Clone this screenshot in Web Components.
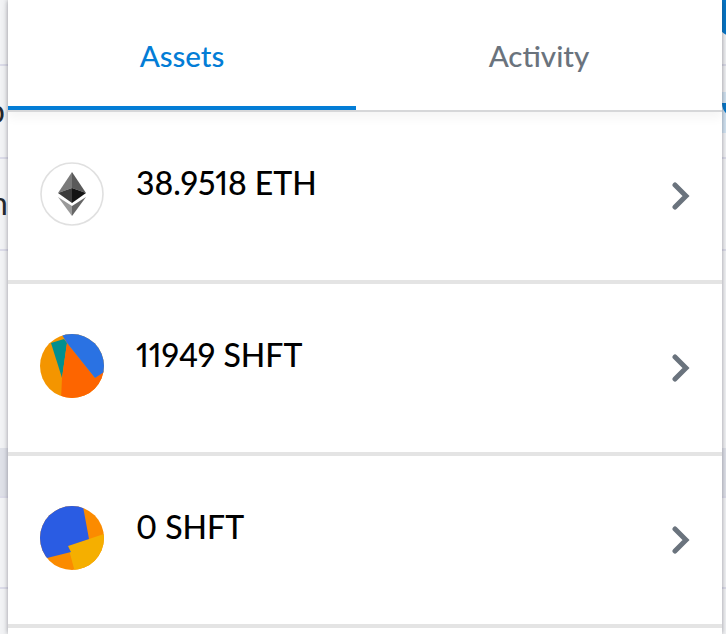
<!DOCTYPE html>
<html>
<head>
<meta charset="utf-8">
<style>
  html, body { margin: 0; height: 100%; overflow: hidden; background: #fff; }
</style>
</head>
<body>
<wallet-page>
  <asset-modal>
    <modal-tabs></modal-tabs>
    <asset-row amount="38.9518 ETH" icon="eth"></asset-row>
    <asset-row amount="11949 SHFT" icon="pie"></asset-row>
    <asset-row amount="0 SHFT" icon="blocks"></asset-row>
  </asset-modal>
</wallet-page>

<script>
const ICONS = {
	eth: `<svg width="64" height="64" viewBox="0 0 64 64">
		<circle cx="32" cy="32" r="31" fill="#fff" stroke="#e0e0e0" stroke-width="1.6"/>
		<path d="M32 10 18 31 32 26z" fill="#7a7a7a"/>
		<path d="M32 10 46 31 32 26z" fill="#5a5a5a"/>
		<path d="M32 26 18 31 32 41z" fill="#3c3c3c"/>
		<path d="M32 26 46 31 32 41z" fill="#141414"/>
		<path d="M18 35 32 44V54z" fill="#9a9a9a"/>
		<path d="M46 35 32 44V54z" fill="#666"/>
	</svg>`,
	pie: `<svg width="64" height="64" viewBox="0 0 64 64">
		<defs><clipPath id="c"><circle cx="32" cy="32" r="32"/></clipPath></defs>
		<g clip-path="url(#c)">
			<rect width="64" height="64" fill="#f49500"/>
			<path d="M11 9 24 5 27 9 22 44z" fill="#028f8f"/>
			<path d="M21 66 22 44 27 9 55 44 70 32V70z" fill="#fd6500"/>
			<path d="M22 1 27 9 55 44 70 34V-5H22z" fill="#2a72e3"/>
		</g>
	</svg>`,
	blocks: `<svg width="64" height="64" viewBox="0 0 64 64">
		<defs><clipPath id="d"><circle cx="32" cy="32" r="32"/></clipPath></defs>
		<g clip-path="url(#d)">
			<rect width="64" height="64" fill="#fb8b00"/>
			<path d="M28 40 70 26V70H36z" fill="#f5af00"/>
			<path d="M-5-5H42L49 33 28 40 31 46 7 52-5 56z" fill="#2a5ce3"/>
		</g>
	</svg>`,
};

class WalletPage extends HTMLElement {
	constructor() {
		super();
		this.attachShadow({ mode: 'open' });
		this.shadowRoot.innerHTML = `
			<style>
				:host {
					display: block;
					position: relative;
					width: 726px;
					height: 634px;
					overflow: hidden;
					background: #f2f3f5;
					font-family: 'Lato', 'Noto Sans', sans-serif;
				}
				.row { box-sizing: border-box; border-bottom: 2px solid #dcdce9; background: #f2f3f5; position: relative; }
				.top { height: 66px; }
				.mid { height: 93px; }
				.low { height: 92px; }
				.gap { height: 247px; background: linear-gradient(#f2f3f5 197px, #dfe1e8 197px); }
				.end { height: 91px; }
				.peek { position: absolute; font-size: 32px; line-height: 1; color: #24292e; }
				.mid .peek { top: 29px; left: -13px; }
				.low .peek { top: 28px; left: -10px; }
				.tint { position: absolute; left: 720px; right: 0; top: 26px; height: 41px; background: #d3e4f2; }
				.clip { position: absolute; inset: 11px 0 0; overflow: hidden; }
				.dot { position: absolute; border-radius: 50%; background: #0376c9; }
				.top .dot { width: 48px; height: 48px; left: 714px; top: -10px; }
				.tint .dot { width: 30px; height: 30px; left: 2px; top: -15px; }
			</style>
			<div class="row top"><span class="dot"></span></div>
			<div class="row mid"><span class="peek">p</span><div class="tint"><div class="clip"><span class="dot"></span></div></div></div>
			<div class="row low"><span class="peek">n</span></div>
			<div class="row gap"></div>
			<div class="row end"></div>
			<slot></slot>
		`;
	}
}

class AssetModal extends HTMLElement {
	constructor() {
		super();
		this.attachShadow({ mode: 'open' });
		this.shadowRoot.innerHTML = `
			<style>
				:host {
					display: flex;
					flex-direction: column;
					position: absolute;
					top: 0;
					bottom: 0;
					left: 8px;
					width: 714px;
					background: #fff;
					box-shadow: 0 0 5px rgba(60, 60, 70, 0.5);
				}
			</style>
			<slot></slot>
		`;
	}
}

class ModalTabs extends HTMLElement {
	constructor() {
		super();
		this.attachShadow({ mode: 'open' });
		this.shadowRoot.innerHTML = `
			<style>
				:host {
					display: flex;
					flex: none;
					height: 112px;
					box-sizing: border-box;
					border-bottom: 2px solid #d6d7d9;
					box-shadow: 0 6px 10px rgba(0, 0, 0, 0.045);
					font-size: 29.5px;
					font-weight: 500;
				}
				.tab {
					text-align: center;
					line-height: 111px;
					height: 110px;
					box-sizing: border-box;
					color: #6a737d;
				}
				.active { flex: 0 0 348px; color: #037dd6; border-bottom: 4px solid #037dd6; }
				.rest { flex: 1; }
			</style>
			<div class="tab active">Assets</div>
			<div class="tab rest">Activity</div>
		`;
	}
}

class AssetRow extends HTMLElement {
	constructor() {
		super();
		this.attachShadow({ mode: 'open' });
		this.shadowRoot.innerHTML = `
			<style>
				:host {
					display: flex;
					flex: none;
					align-items: flex-start;
					box-sizing: border-box;
					height: 172px;
					padding: 50px 30px 0 32px;
					border-bottom: 4px solid #e4e4e4;
				}
				.icon { width: 64px; height: 64px; flex: none; }
				.amount {
					flex: 1;
					margin-left: 32px;
					font-size: 32px;
					font-weight: 500;
					font-variant-numeric: proportional-nums;
					line-height: 41px;
					color: #000;
				}
				.chev { margin-top: 20px; }
			</style>
			<div class="icon">${ICONS[this.getAttribute('icon')]}</div>
			<div class="amount">${this.getAttribute('amount')}</div>
			<svg class="chev" width="22" height="28" viewBox="0 0 22 28">
				<path d="M5 3 16 14 5 25" fill="none" stroke="#6a737d" stroke-width="5" stroke-linecap="round" stroke-linejoin="miter"/>
			</svg>
		`;
	}
}

customElements.define('wallet-page', WalletPage);
customElements.define('asset-modal', AssetModal);
customElements.define('modal-tabs', ModalTabs);
customElements.define('asset-row', AssetRow);
</script>
</body>
</html>
